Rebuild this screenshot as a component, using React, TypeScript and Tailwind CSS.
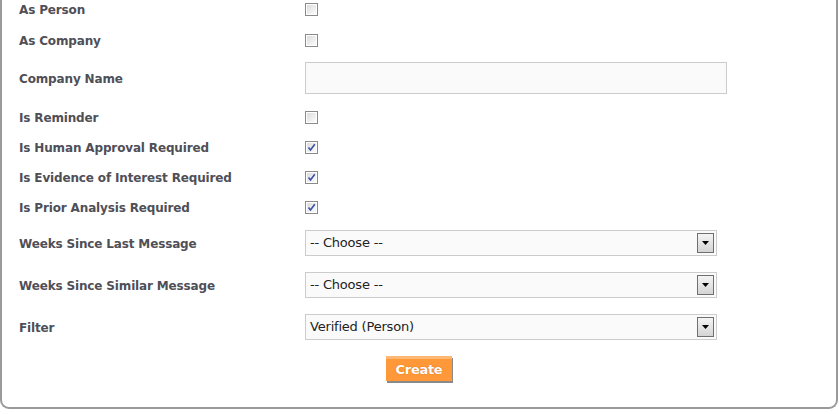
import React from "react";

const labelCls =
  "w-[303px] shrink-0 pl-[17px] pt-[2px] text-[12px] font-bold text-[#4f4f57] [font-family:'DejaVu_Sans',Verdana,sans-serif] tracking-[-0.15px]";

function Checkbox({ checked }: { checked?: boolean }) {
  return (
    <div className="w-[13px] h-[13px] border border-[#8a8a8a] bg-white p-[1px]">
      <div className="w-full h-full bg-gradient-to-br from-[#dcdcdc] to-[#fbfbfb] relative">
        {checked && (
          <svg viewBox="0 0 9 9" className="absolute inset-0 w-[9px] h-[9px]">
            <path d="M1.5 4.5 L3.5 7 L7.8 1.2" stroke="#3a4fa8" strokeWidth="1.6" fill="none" />
          </svg>
        )}
      </div>
    </div>
  );
}

function CheckRow({ label, checked, cls }: { label: string; checked?: boolean; cls?: string }) {
  return (
    <div className={"flex items-center h-[30px] " + (cls ?? "")}>
      <div className={labelCls}>{label}</div>
      <Checkbox checked={checked} />
    </div>
  );
}

function Select({ value }: { value: string }) {
  return (
    <div className="w-[412px] h-[26px] border border-[#cccccc] bg-[#fafafa] flex items-center justify-between pl-[4px] pr-[2px]">
      <span className="text-[13px] text-[#222] [font-family:'DejaVu_Sans',Verdana,sans-serif] tracking-[-0.2px]">
        {value}
      </span>
      <div className="w-[17px] h-[20px] border border-[#6f6f6f] bg-gradient-to-b from-[#f4f4f4] to-[#d4d4d4] flex items-center justify-center">
        <svg viewBox="0 0 7 4" className="w-[7px] h-[4px]">
          <path d="M0 0 H7 L3.5 4 Z" fill="#000" />
        </svg>
      </div>
    </div>
  );
}

function SelectRow({ label, value, cls }: { label: string; value: string; cls?: string }) {
  return (
    <div className={"flex items-center h-[26px] " + (cls ?? "")}>
      <div className={labelCls}>{label}</div>
      <Select value={value} />
    </div>
  );
}

export default function App() {
  return (
    <div className="w-[839px] h-[414px] bg-white overflow-hidden">
      <div className="w-[838px] h-[409px] border-x-2 border-b-2 border-[#9a9a9a] rounded-b-[9px] flex flex-col">
        <CheckRow label="As Person" cls="-mt-[6px]" />
        <CheckRow label="As Company" cls="mt-[1px]" />
        <div className="flex items-center h-[32px] mt-[7px]">
          <div className={labelCls}>Company Name</div>
          <div className="w-[422px] h-[32px] border border-[#cccccc] bg-[#fafafa]" />
        </div>
        <CheckRow label="Is Reminder" cls="mt-[8px]" />
        <CheckRow label="Is Human Approval Required" checked />
        <CheckRow label="Is Evidence of Interest Required" checked />
        <CheckRow label="Is Prior Analysis Required" checked />
        <SelectRow label="Weeks Since Last Message" value="-- Choose --" cls="mt-[8px]" />
        <SelectRow label="Weeks Since Similar Message" value="-- Choose --" cls="mt-[16px]" />
        <SelectRow label="Filter" value="Verified (Person)" cls="mt-[16px]" />
        <div className="mt-[16px] pl-[384px]">
          <div className="w-[66px] h-[25px] bg-[#ff9838] border-t-[3px] border-[#ffb873] shadow-[1px_2px_0_#8a8a8a] flex items-center justify-center">
            <span className="text-[13px] font-bold text-white [font-family:'DejaVu_Sans',Verdana,sans-serif] tracking-[-0.3px] [text-shadow:0_0_1px_#c06010]">
              Create
            </span>
          </div>
        </div>
      </div>
    </div>
  );
}
